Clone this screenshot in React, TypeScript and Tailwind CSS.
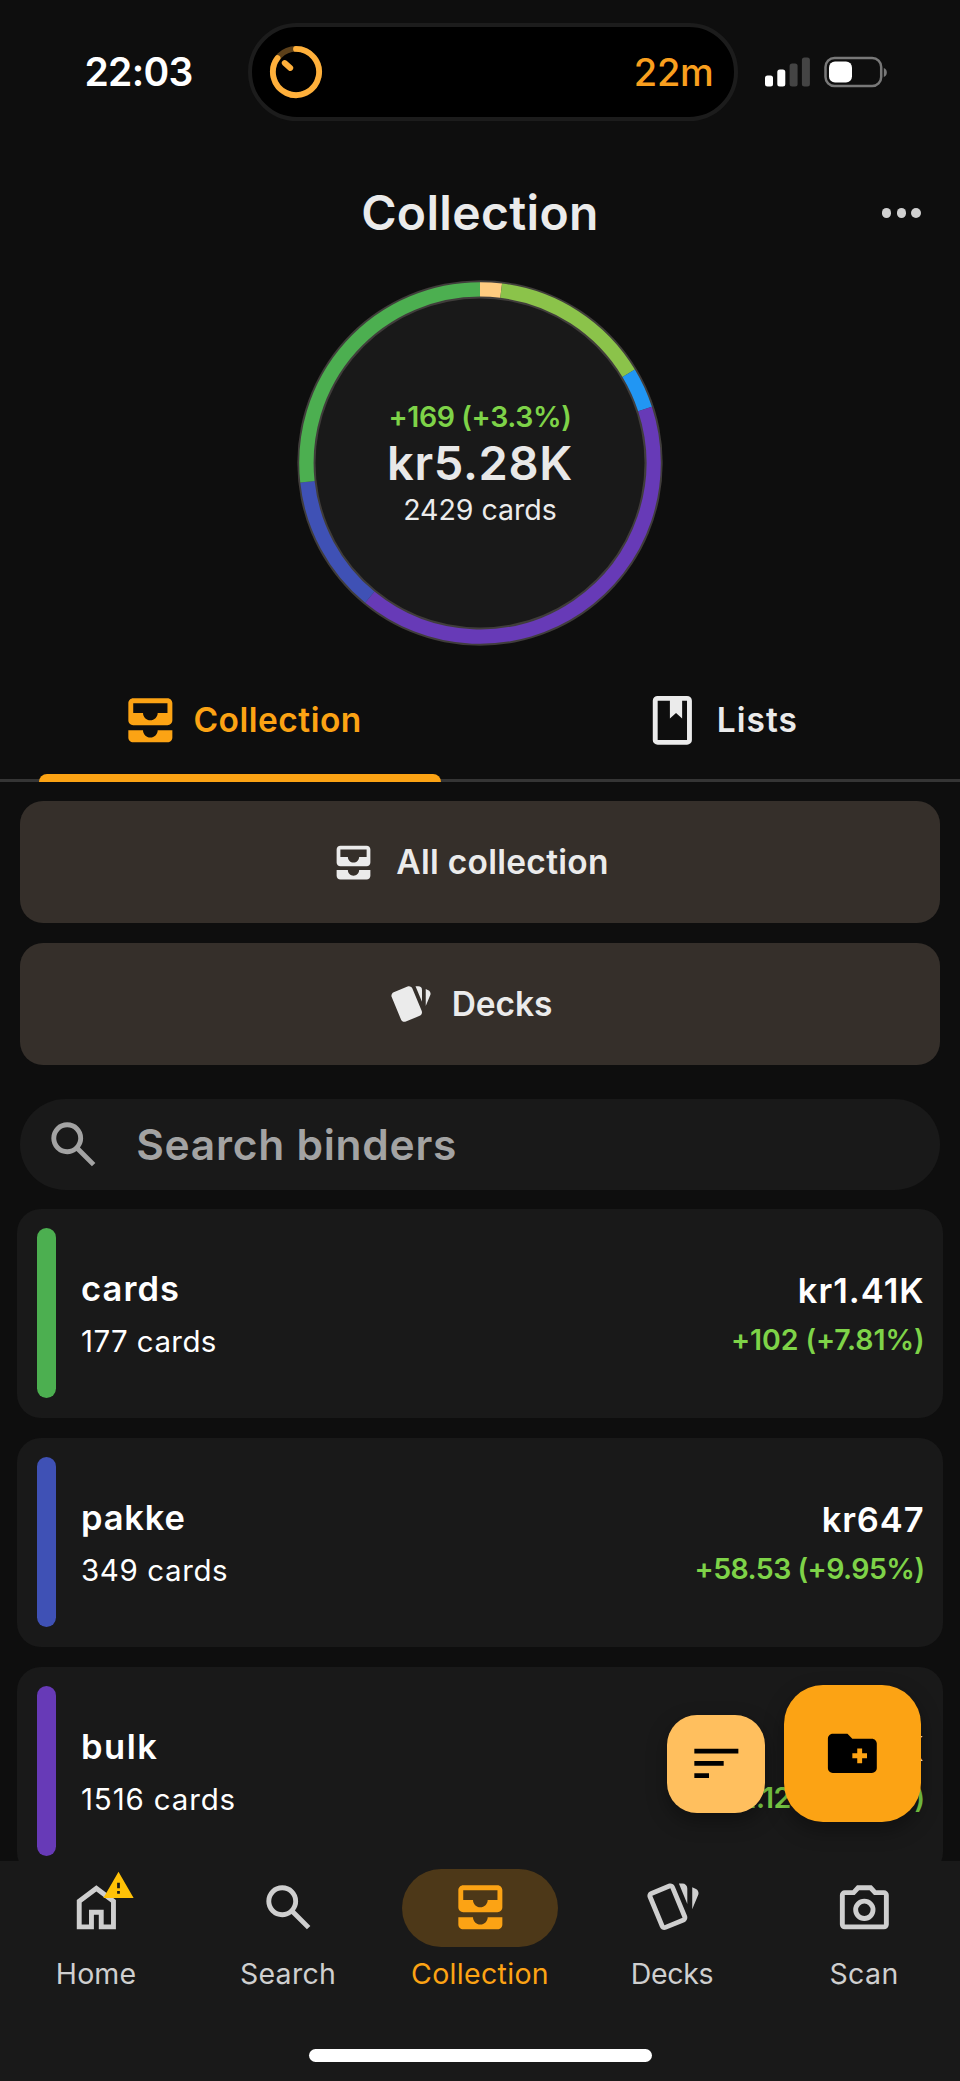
import React from 'react';
import clsx from 'clsx';
import { MdAllInbox, MdSort, MdWarning } from 'react-icons/md';

interface Binder {
  name: string;
  count: string;
  value: string;
  change: string;
  bar: string;
  // tracking for each of the four labels
  spacing: [string, string, string, string];
}

const binders: Binder[] = [
  {
    name: 'cards',
    count: '177 cards',
    value: 'kr1.41K',
    change: '+102 (+7.81%)',
    bar: 'bg-[#4caf50]',
    spacing: ['tracking-[1.1px]', 'tracking-[0.4px]', 'tracking-[1px]', 'tracking-[-0.1px]'],
  },
  {
    name: 'pakke',
    count: '349 cards',
    value: 'kr647',
    change: '+58.53 (+9.95%)',
    bar: 'bg-[#3f51b5]',
    spacing: ['tracking-[0.8px]', 'tracking-[0.6px]', 'tracking-[0.9px]', 'tracking-[-0.55px]'],
  },
  {
    name: 'bulk',
    count: '1516 cards',
    value: 'kr2.16K',
    change: '+11.12 (+0.52%)',
    bar: 'bg-[#673ab7]',
    spacing: ['tracking-[1.5px]', 'tracking-[0.85px]', 'tracking-[1px]', 'tracking-[-0.55px]'],
  },
];

// Slices of the ring, in degrees clockwise from the top
const slices = [
  { from: 0, to: 7, color: '#ffcc80' },
  { from: 7, to: 58.9, color: '#8bc34a' },
  { from: 58.9, to: 71.9, color: '#2196f3' },
  { from: 71.9, to: 219.4, color: '#673ab7' },
  { from: 219.4, to: 263.8, color: '#3f51b5' },
  { from: 263.8, to: 360, color: '#4caf50' },
];

const arc = (cx: number, cy: number, r: number, from: number, to: number) => {
  const point = (deg: number) => {
    const a = ((deg - 90) * Math.PI) / 180;
    return `${(cx + r * Math.cos(a)).toFixed(2)} ${(cy + r * Math.sin(a)).toFixed(2)}`;
  };
  return `M${point(from)}A${r} ${r} 0 ${to - from > 180 ? 1 : 0} 1 ${point(to)}`;
};

interface IconProps {
  size?: number;
  className?: string;
}

const SearchIcon = ({ size = 58.7, className }: IconProps) => (
  <svg viewBox="0 0 24 24" width={size} height={size} fill="currentColor" className={className}>
    <path d="m19.6 21-6.3-6.3q-.75.6-1.725.95Q10.6 16 9.5 16q-2.725 0-4.612-1.887Q3 12.225 3 9.5q0-2.725 1.888-4.612Q6.775 3 9.5 3t4.613 1.888Q16 6.775 16 9.5q0 1.1-.35 2.075-.35.975-.95 1.725l6.3 6.3ZM9.5 14q1.875 0 3.188-1.312Q14 11.375 14 9.5q0-1.875-1.312-3.188Q11.375 5 9.5 5 7.625 5 6.312 6.312 5 7.625 5 9.5q0 1.875 1.312 3.188Q7.625 14 9.5 14Z" />
  </svg>
);

const HomeIcon = ({ size = 58.7 }: IconProps) => (
  <svg viewBox="0 0 24 24" width={size} height={size} fill="currentColor">
    <path d="M6 19h3v-6h6v6h3v-9l-6-4.5L6 10v9Zm-2 2V9l8-6 8 6v12h-7v-6h-2v6H4Z" />
  </svg>
);

const ListsIcon = ({ size = 58.7 }: IconProps) => (
  <svg viewBox="0 0 24 24" width={size} height={size} fill="currentColor">
    <path d="M18 2H6a2 2 0 0 0-2 2v16a2 2 0 0 0 2 2h12a2 2 0 0 0 2-2V4a2 2 0 0 0-2-2Zm0 18H6V4h5v7.2L13.5 9l2.5 2.2V4h2v16Z" />
  </svg>
);

const CardsIcon = ({ size = 45 }: IconProps) => (
  <svg viewBox="0 0 24 24" width={size} height={size} fill="currentColor">
    <path d="M21.47 4.35l-1.34-.56v9.03l2.43-5.86c.41-1.02-.06-2.19-1.09-2.61M1.97 8.05l4.96 11.95c.31.77 1.04 1.24 1.81 1.26.26 0 .53-.05.79-.16l7.37-3.05c.75-.31 1.21-1.05 1.23-1.79.01-.26-.04-.55-.13-.81L13 3.5c-.27-.77-1.03-1.24-1.81-1.25-.26 0-.52.06-.77.15L3.06 5.45c-1.02.42-1.51 1.59-1.09 2.6M18.12 4.25a2 2 0 0 0-2-2h-1.45l3.45 8.34" />
  </svg>
);

const CardsOutlineIcon = ({ size = 58.7 }: IconProps) => (
  <svg viewBox="0 0 24 24" width={size} height={size} fill="currentColor">
    <path
      fillRule="evenodd"
      d="M11.19 2.25c-.26 0-.52.06-.77.15L3.06 5.45c-1.02.42-1.51 1.59-1.09 2.6L6.93 20c.31.77 1.04 1.23 1.81 1.25.26 0 .53-.03.79-.15l7.37-3.05c.75-.31 1.21-1.05 1.23-1.8.01-.25-.04-.54-.13-.8L13 3.5c-.29-.77-1.03-1.25-1.81-1.25ZM11.19 4.22l4.98 12.02-7.39 3.06L3.8 7.29ZM14.67 2.25l3.45 8.35V4.25a2 2 0 0 0-2-2ZM20.13 3.79v9.03l2.43-5.86c.41-1.02-.06-2.18-1.09-2.6Z"
    />
  </svg>
);

const CameraIcon = ({ size = 58.7 }: IconProps) => (
  <svg viewBox="0 0 24 24" width={size} height={size} fill="currentColor">
    <path d="M4 21q-.825 0-1.412-.587Q2 19.825 2 19V7q0-.825.588-1.412Q3.175 5 4 5h3.15L9 3h6l1.85 2H20q.825 0 1.413.588Q22 6.175 22 7v12q0 .825-.587 1.413Q20.825 21 20 21Zm0-2h16V7h-4.05l-1.825-2h-4.25L8.05 7H4Z" />
    <circle cx="12" cy="13" r="3.55" fill="none" stroke="currentColor" strokeWidth="2" />
  </svg>
);

const FolderPlusIcon = ({ size = 58.7, className }: IconProps) => (
  <svg viewBox="0 0 24 24" width={size} height={size} fill="currentColor" className={className}>
    <path d="M20 6h-8l-2-2H4c-1.1 0-2 .9-2 2v12c0 1.1.9 2 2 2h16c1.1 0 2-.9 2-2V8c0-1.1-.9-2-2-2Zm-2 8h-2v2h-2v-2h-2v-2h2v-2h2v2h2v2Z" />
  </svg>
);

const StatusBar = () => (
  <div className="flex h-[146px] shrink-0 items-start pt-[23px]">
    <div className="flex h-[98px] w-[248px] items-center pl-[84.5px]">
      <span className="text-[39px] font-semibold tracking-[-0.7px] text-white">22:03</span>
    </div>
    <div className="flex h-[98px] w-[490px] items-center justify-between rounded-full border-4 border-[#1c1c1c] bg-black pr-[20.5px] pl-[17px]">
      <svg width="54" height="54" viewBox="0 0 54 54" fill="none" strokeWidth="5.8">
        <circle cx="27" cy="27" r="23.1" stroke="#5c401a" />
        <path d={arc(27, 27, 23.1, 0, 307)} stroke="#ffb03b" strokeLinecap="round" />
        <path d="M15.7 18l5.6 5" stroke="#ffb03b" strokeLinecap="round" />
      </svg>
      <span className="text-[38px] font-medium tracking-[-0.3px] text-[#f99f1e]">22m</span>
    </div>
    <svg width="124" height="40" viewBox="0 0 124 40" className="mt-[28.5px] ml-[26px]">
      <rect x="1" y="23.5" width="8" height="11" rx="2.5" fill="#fff" />
      <rect x="13.3" y="17.5" width="8" height="17" rx="2.5" fill="#fff" />
      <rect x="25.6" y="11.5" width="8" height="23" rx="2.5" fill="#444" />
      <rect x="37.9" y="5.5" width="8" height="29" rx="2.5" fill="#444" />
      <rect x="61.5" y="6" width="55.7" height="28" rx="9" fill="none" stroke="#787878" strokeWidth="2.5" />
      <path d="M119.8 16c4 1.5 4 7.5 0 9Z" fill="#787878" />
      <rect x="65" y="9.5" width="23" height="21" rx="6" fill="#fff" />
    </svg>
  </div>
);

const Header = () => (
  <header className="relative flex h-[134px] shrink-0 items-center justify-center">
    <h1 className="text-[48px] font-[570] tracking-[0.35px] text-[#ebebeb]">Collection</h1>
    <button className="absolute right-[39px] flex gap-[5.2px]">
      <span className="size-[9.6px] rounded-full bg-[#d0d0d0]" />
      <span className="size-[9.6px] rounded-full bg-[#d0d0d0]" />
      <span className="size-[9.6px] rounded-full bg-[#d0d0d0]" />
    </button>
  </header>
);

const ValueRing = () => (
  <div className="relative flex h-[380px] shrink-0 justify-center">
    <svg width="366" height="366" viewBox="0 0 366 366" fill="none">
      <circle cx="183" cy="183" r="182.7" fill="#403d3b" />
      <circle cx="183" cy="183" r="164.5" fill="#191919" />
      {slices.map((s) => (
        <path key={s.color} d={arc(183, 183, 173.6, s.from, s.to)} stroke={s.color} strokeWidth="14.4" />
      ))}
    </svg>
    <div className="absolute top-[115.5px] flex flex-col items-center">
      <span className="text-[28.5px] leading-[41px] font-[570] tracking-[-0.4px] text-[#7ed348]">+169 (+3.3%)</span>
      <span className="text-[47px] leading-[52.5px] font-[570] tracking-[0.65px] text-[#e8e8e8]">kr5.28K</span>
      <span className="text-[28.5px] leading-[41.5px] text-[#ebebeb]">2429 cards</span>
    </div>
  </div>
);

const Tabs = () => (
  <div className="relative flex h-[122px] shrink-0 border-b-3 border-[#353535]">
    <button className="flex flex-1 items-center justify-center gap-[13.5px] pt-[2px] pl-[2px] text-[#fca314]">
      <MdAllInbox size={58.7} />
      <span className="text-[33.5px] font-[570] tracking-[0.5px]">Collection</span>
    </button>
    <button className="flex flex-1 items-center justify-center gap-[15px] pt-[2px] text-[#ebebeb]">
      <ListsIcon />
      <span className="text-[33.5px] font-[570] tracking-[1px]">Lists</span>
    </button>
    <div className="absolute -bottom-[3px] left-[39px] h-2 w-[402px] rounded-t-lg bg-[#fca314]" />
  </div>
);

const BinderRow = ({ binder }: { binder: Binder }) => (
  <div className="flex h-[209px] shrink-0 rounded-[24px] bg-[#191919] pr-[18.5px] pl-[19.5px]">
    <div className={clsx('mt-[19px] h-[170px] w-[19.5px] rounded-full', binder.bar)} />
    <div className="flex flex-1 flex-col pt-[52.5px] pl-[25px] text-white">
      <span className={clsx('text-[34.5px] leading-[53.5px] font-[570]', binder.spacing[0])}>{binder.name}</span>
      <span className={clsx('text-[29.5px] leading-[53.5px]', binder.spacing[1])}>{binder.count}</span>
    </div>
    <div className="flex flex-col items-end pt-[57.5px]">
      <span className={clsx('text-[34.5px] leading-[48.3px] font-[570] text-white', binder.spacing[2])}>{binder.value}</span>
      <span className={clsx('text-[28.5px] leading-[49.8px] font-[570] text-[#7ed348]', binder.spacing[3])}>{binder.change}</span>
    </div>
  </div>
);

interface NavItemProps {
  label: string;
  spacing: string;
  active?: boolean;
  children: React.ReactNode;
}

const NavItem = ({ label, spacing, active, children }: NavItemProps) => (
  <button className={clsx('flex flex-1 flex-col items-center', active ? 'text-[#fca314]' : 'text-[#cfcfcf]')}>
    <span className={clsx('relative flex h-[78px] w-[156px] items-center justify-center rounded-full', active && 'bg-[#4d3818]')}>
      {children}
    </span>
    <span className={clsx('mt-[7px] text-[28.5px] leading-10', spacing)}>{label}</span>
  </button>
);

const App = () => {
  return (
    <div className="relative flex h-[2081px] w-[960px] flex-col overflow-hidden bg-[#0e0e0e] font-['Inter',sans-serif]">
      <StatusBar />
      <Header />
      <ValueRing />
      <Tabs />

      <main className="relative flex min-h-0 flex-1 flex-col overflow-hidden pt-[19px]">
        <div className="flex flex-col gap-5 px-5 text-[33.5px] font-[570] text-[#ebebeb]">
          <button className="flex h-[122px] items-center justify-center gap-[20px] rounded-[23px] bg-[#352f2a] pr-5">
            <MdAllInbox size={45} />
            <span className="tracking-[0.28px]">All collection</span>
          </button>
          <button className="flex h-[122px] items-center justify-center gap-[19px] rounded-[23px] bg-[#352f2a] pr-5">
            <CardsIcon />
            <span className="tracking-[-0.1px]">Decks</span>
          </button>
        </div>

        <div className="mx-5 mt-[34px] flex h-[90.5px] shrink-0 items-center rounded-full bg-[#191919] pl-[23.5px] text-[#a3a3a3]">
          <SearchIcon />
          <span className="pt-[1px] pl-[34px] text-[42.5px] leading-[60px] font-[570] tracking-[0.75px]">Search binders</span>
        </div>

        <div className="mt-[19.5px] flex flex-col gap-5 px-[17px]">
          {binders.map((b) => (
            <BinderRow key={b.name} binder={b} />
          ))}
        </div>

        <div className="absolute right-[39px] bottom-[39px] flex items-end gap-[19px] text-black">
          <button className="mb-[9.5px] flex size-[98px] items-center justify-center rounded-[30px] bg-[#ffbf5e] shadow-[0_8px_20px_rgba(0,0,0,0.35)]">
            <MdSort size={58.7} />
          </button>
          <button className="flex size-[137px] items-center justify-center rounded-[39px] bg-[#fca314] shadow-[0_8px_20px_rgba(0,0,0,0.35)]">
            <FolderPlusIcon />
          </button>
        </div>
      </main>

      <nav className="flex h-[220px] shrink-0 flex-col items-center bg-[#191919] pt-[7.5px]">
        <div className="flex w-full">
          <NavItem label="Home" spacing="tracking-[0.12px]">
            <HomeIcon />
            <MdWarning size={33} className="absolute top-[0.5px] left-[84px] text-[#ffc107]" />
          </NavItem>
          <NavItem label="Search" spacing="tracking-[0.26px]">
            <SearchIcon />
          </NavItem>
          <NavItem label="Collection" spacing="tracking-[0.31px]" active>
            <MdAllInbox size={58.7} />
          </NavItem>
          <NavItem label="Decks" spacing="tracking-[-0.35px]">
            <CardsOutlineIcon />
          </NavItem>
          <NavItem label="Scan" spacing="tracking-[0.38px]">
            <CameraIcon />
          </NavItem>
        </div>
        <div className="mt-[55.5px] h-[12.5px] w-[343px] rounded-full bg-white" />
      </nav>
    </div>
  );
};

export default App;
